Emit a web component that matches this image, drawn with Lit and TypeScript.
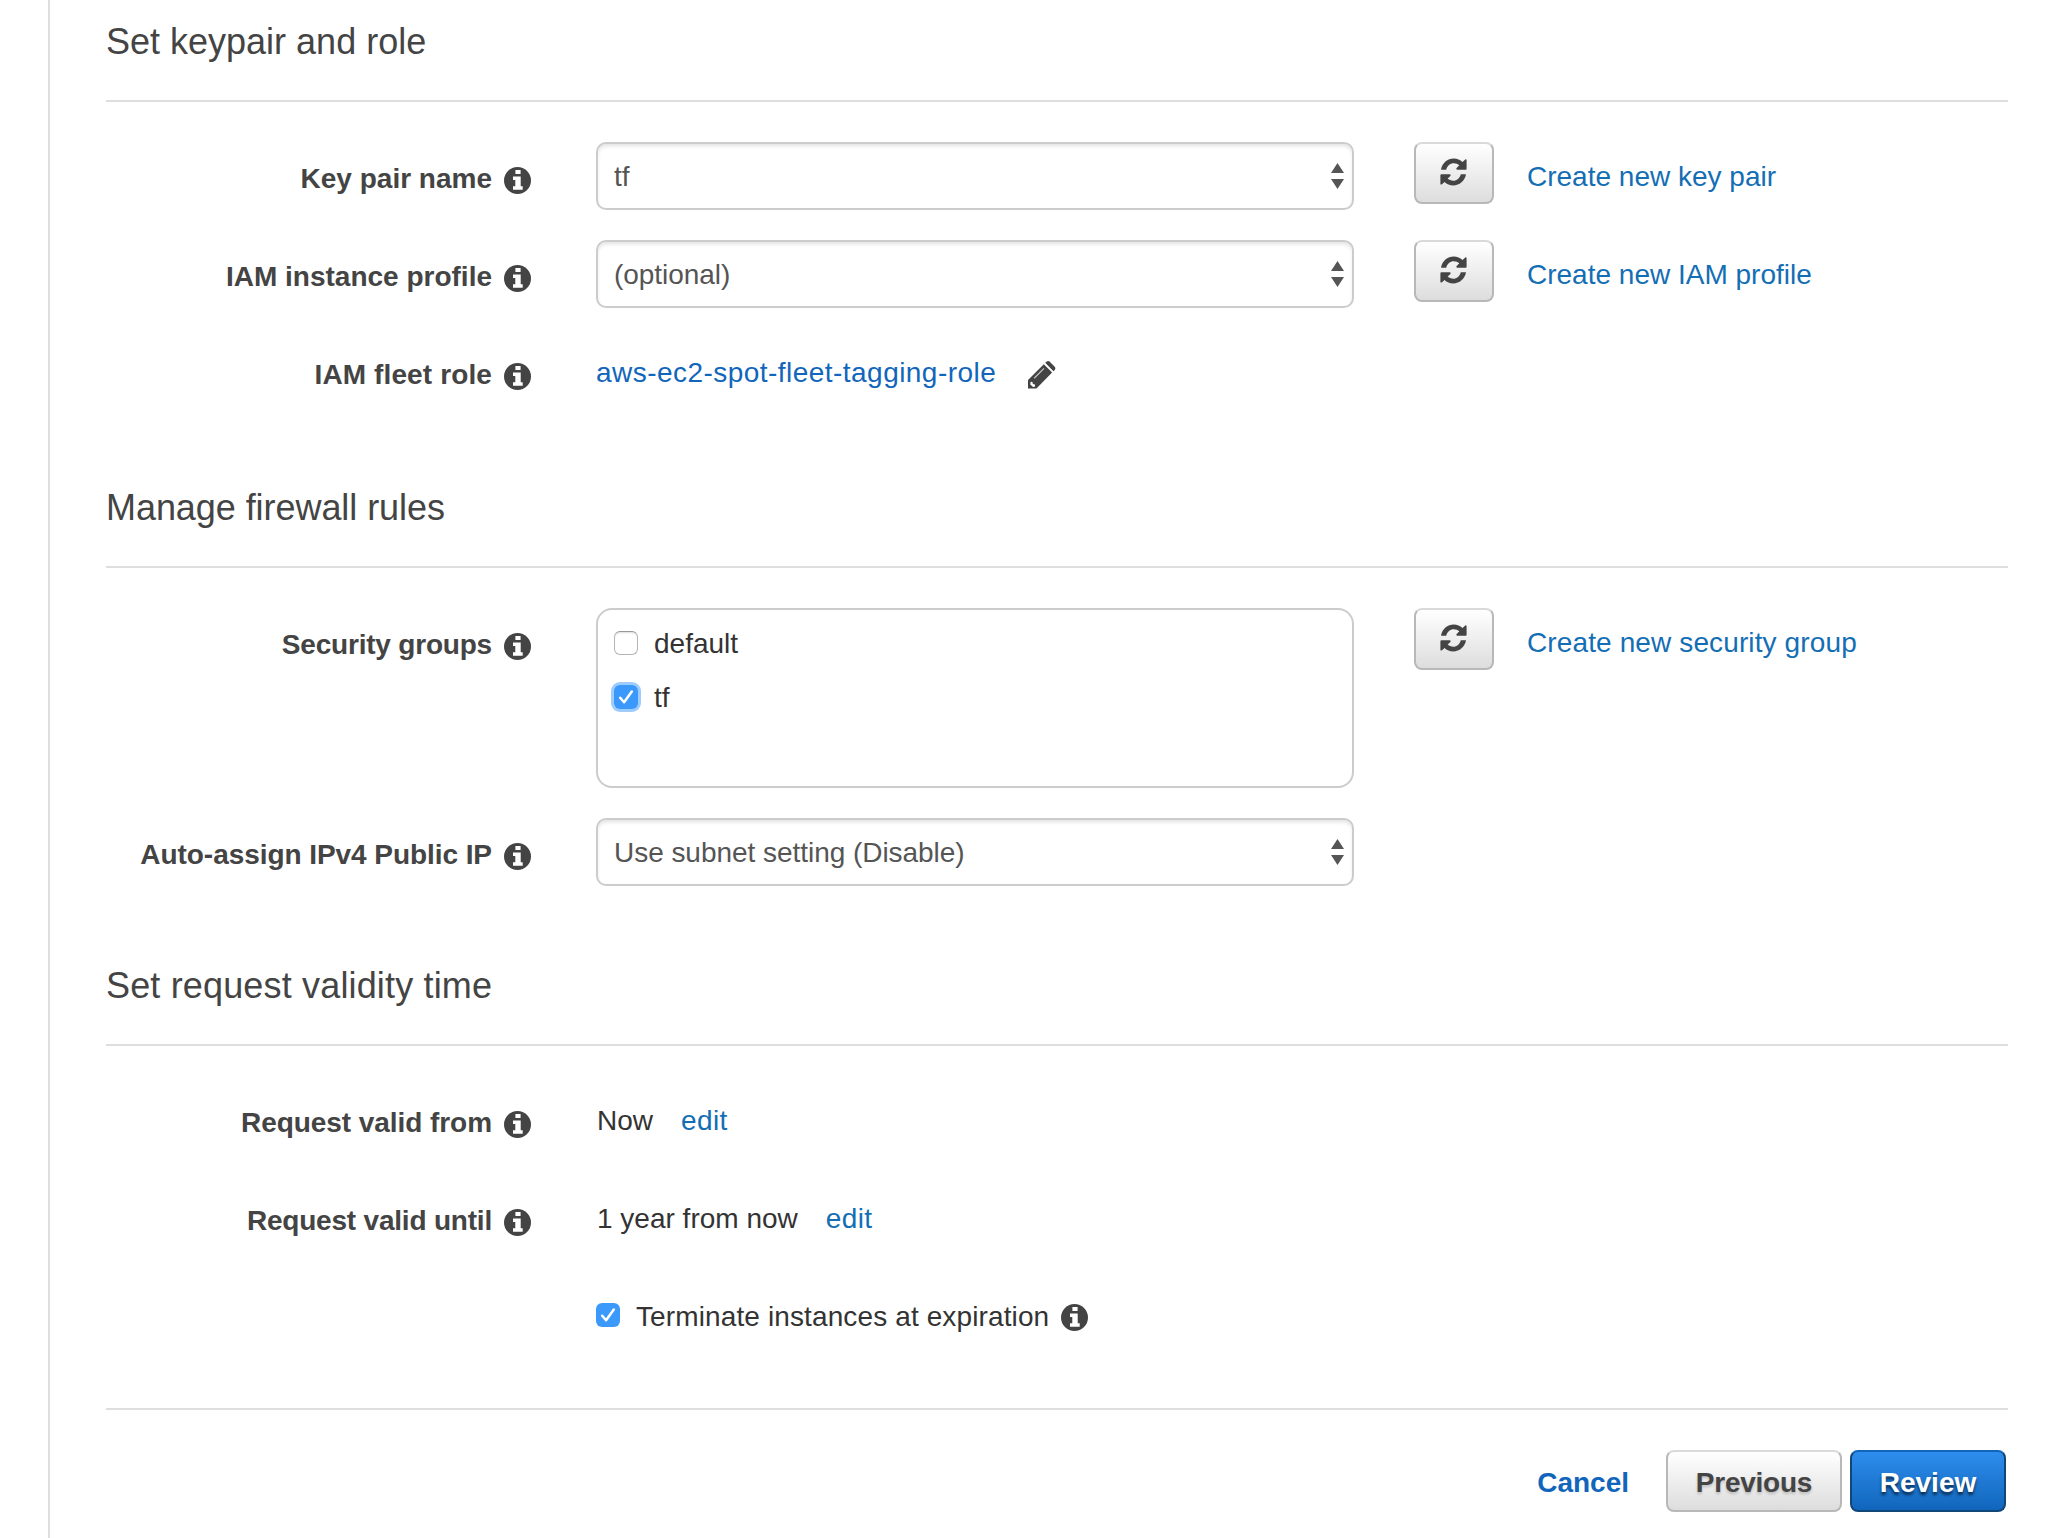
import { LitElement, html, svg, css } from "lit";
import { customElement, property } from "lit/decorators.js";

@customElement("info-icon")
class InfoIcon extends LitElement {
  static styles = css`
    :host { display: block; width: 27px; height: 27px; flex: none; }
    svg { display: block; }
  `;
  render() {
    return html`<svg width="27" height="27" viewBox="0 0 27 27">
      <circle cx="13.5" cy="13.5" r="13.5" fill="#444"/>
      <path fill="#fff" d="M11.4 3h5.2v4h-5.2zM9 9.500h7.700v9.700h2v3.500H9v-3.500h2.300v-6.200H9z"/>
    </svg>`;
  }
}

@customElement("check-box")
class CheckBox extends LitElement {
  @property({ type: Boolean }) checked = false;
  @property({ type: Boolean }) focused = false;
  static styles = css`
    :host { display: block; flex: none; }
    .box {
      box-sizing: border-box; width: 24px; height: 24px; border-radius: 6px;
      border: 1px solid #b4b4b4; border-top-color: #999; background: #fff;
      box-shadow: inset 0 2px 2px -1px #ddd;
    }
    .on { border: 0; background: #3b99fc; box-shadow: none; }
    .ring { box-shadow: 0 0 0 3px #9dccfd; }
    svg { display: block; }
  `;
  render() {
    const cls = `box ${this.checked ? "on" : ""} ${this.focused ? "ring" : ""}`;
    return html`<div class=${cls}>
      ${this.checked
        ? html`<svg width="24" height="24" viewBox="0 0 24 24"><path d="M6.2 12.8l3.900 4.500 7.700-10.700" fill="none" stroke="#fff" stroke-width="2.5" stroke-linecap="round" stroke-linejoin="round"/></svg>`
        : ""}
    </div>`;
  }
}

@customElement("select-box")
class SelectBox extends LitElement {
  @property() value = "";
  static styles = css`
    .select {
      box-sizing: border-box; width: 758px; height: 68px; padding: 0 8px 0 16px;
      display: flex; align-items: center; justify-content: space-between;
      border: 2px solid #ccc; border-radius: 10px; background: #fff; color: #555;
      box-shadow: inset 0 3px 4px -1px rgba(0, 0, 0, 0.12);
    }
    .value { line-height: 32px; padding-top: 2px; letter-spacing: -0.04px; }
    svg { display: block; }
  `;
  render() {
    return html`<div class="select">
      <span class="value">${this.value}</span>
      <svg width="13" height="26" viewBox="0 0 13 26"><path fill="#555" d="M6.500 0L13 10H0zM0 16h13L6.500 26z"/></svg>
    </div>`;
  }
}

const refreshIcon = svg`<path fill="#444" d="M1 11.6C2.2 4.8 7.6.3 14 .3c3.400 0 6.500 1.300 8.800 3.500l2.600-2.300c.7-.6 1.600-.3 1.600.6v8.500c0 .6-.4 1-1 1h-8.400c-1 0-1.400-1-.7-1.700l2.700-2.700C18.100 5.800 16.200 5 13.900 5 10.300 5 7.300 7.600 6.300 11.600z"/><path fill="#444" d="M26.400 16.300C25.200 23.100 19.800 27.600 13.400 27.600c-3.400 0-6.500-1.300-8.800-3.500L2 26.400c-.7.600-1.600.300-1.600-.600v-8.500c0-.6.400-1 1-1h8.400c1 0 1.400 1 .7 1.700l-2.700 2.700c1.500 1.400 3.400 2.200 5.700 2.200 3.600 0 6.600-2.600 7.600-6.600z"/>`;

@customElement("refresh-button")
class RefreshButton extends LitElement {
  static styles = css`
    .button {
      box-sizing: border-box; width: 80px; height: 62px; padding: 0 1px 2px 0; margin: 0;
      display: flex; align-items: center; justify-content: center;
      border: 2px solid #b8b8b8; border-top-color: #dadada; border-radius: 8px;
      background: linear-gradient(#fff, #ddd);
    }
    svg { display: block; }
  `;
  render() {
    return html`<button class="button" aria-label="Refresh">
      <svg width="27" height="28" viewBox="0 0 27.400 28">${refreshIcon}</svg>
    </button>`;
  }
}

@customElement("app-root")
class AppRoot extends LitElement {
  static styles = css`
    :host {
      display: block; font-family: "Liberation Sans", Arial, Helvetica, sans-serif;
      font-size: 28px; line-height: 32px; color: #333; background: #fff;
    }
    .page {
      box-sizing: border-box; height: 1538px; overflow: hidden; margin-left: 48px;
      border-left: 2px solid #dedede; padding: 0 54px 0 56px;
    }
    .title {
      box-sizing: border-box; margin: 0; height: 102px; padding-top: 21px;
      font-size: 36px; line-height: 42px; font-weight: 400; color: #444;
      border-bottom: 2px solid #dedede;
    }
    .rows { padding-top: 40px; }
    .row {
      height: 98px; display: grid; align-items: start;
      grid-template-columns: 490px 818px 113px auto;
    }
    .row.tall { height: 210px; }
    .label {
      box-sizing: border-box; width: 425px; padding-top: 21px;
      display: flex; justify-content: flex-end; gap: 12px;
      font-weight: 700; color: #444; white-space: nowrap;
    }
    .label info-icon { margin-top: 4px; }
    .link { color: #146eb4; text-decoration: none; white-space: nowrap; }
    .deep { color: #1166bb; }
    .side { padding-top: 19px; }
    .text { display: flex; padding-top: 19px; white-space: nowrap; }
    .fleet { gap: 32px; }
    .fleet .link { letter-spacing: 0.46px; }
    .fleet svg { display: block; margin-top: 4px; }
    .when { gap: 28px; padding-left: 1px; }
    .when .link { letter-spacing: 0.4px; }
    .groups {
      box-sizing: border-box; width: 758px; height: 180px; padding: 18px 16px;
      border: 2px solid #ccc; border-radius: 16px;
    }
    .option { display: flex; gap: 16px; height: 54px; }
    .option check-box { margin-top: 3px; }
    .expire { display: flex; gap: 16px; padding-top: 19px; white-space: nowrap; }
    .expire check-box { margin-top: 2px; }
    .expire info-icon { margin: 3px 0 0 -4px; }
    .loose { letter-spacing: 0.12px; }
    .looser { letter-spacing: 0.16px; }
    .tight { letter-spacing: -0.06px; }
    .tighter { letter-spacing: -0.2px; }
    .one { height: 466px; }
    .two { height: 478px; }
    .three { height: 464px; }
    .footer {
      border-top: 2px solid #dedede; padding: 40px 2px 0 0; display: flex;
      justify-content: flex-end; align-items: center; font-weight: 700;
    }
    .cancel { margin-right: 37px; padding-top: 4px; }
    .btn {
      box-sizing: border-box; height: 62px; padding: 4px 0 0; margin: 0; font: inherit;
      border-radius: 8px; border: 2px solid #b8b8b8;
    }
    .previous {
      width: 176px; margin-right: 8px; color: #444; border-top-color: #dadada; letter-spacing: -0.25px;
      background: linear-gradient(#fff, #ddd); text-shadow: 0 2px 3px rgba(0, 0, 0, 0.2);
    }
    .review {
      width: 156px; color: #fff; border-color: #0f4778; border-top-color: #1166bb;
      background: linear-gradient(#2e8ded, #1166bb); text-shadow: 0 3px 3px rgba(0, 0, 0, 0.6);
    }
  `;

  label(text: string, tracking = "") {
    return html`<div class="label"><span class=${tracking}>${text}</span><info-icon></info-icon></div>`;
  }

  create(text: string, tracking = "") {
    return html`<refresh-button></refresh-button><a class="link side ${tracking}">${text}</a>`;
  }

  render() {
    return html`<main class="page">
      <section class="one">
        <h2 class="title">Set keypair and role</h2>
        <div class="rows">
          <div class="row">
            ${this.label("Key pair name")}
            <select-box value="tf"></select-box>
            ${this.create("Create new key pair")}
          </div>
          <div class="row">
            ${this.label("IAM instance profile")}
            <select-box value="(optional)"></select-box>
            ${this.create("Create new IAM profile")}
          </div>
          <div class="row">
            ${this.label("IAM fleet role", "loose")}
            <div class="text fleet">
              <a class="link deep">aws-ec2-spot-fleet-tagging-role</a>
              <svg width="28" height="28" viewBox="0 0 28 28">
                <path fill="#444" d="M0 27.500V19L15.800 3.200l8.300 8.300L8.500 27.500zM17.200 1.800L18.500.7q1.800-1.300 3.500.2l4.500 4.500q1.700 1.800.2 3.700l-1.200 1.200z"/>
                <path fill="#fff" d="M2.600 20.800l1.800.2.5 2 2 .5.200 2-2 .600-2.800-2.600z"/>
                <path d="M6.200 17.200L16 7.400" stroke="#c4c4c4" stroke-width="1.300"/>
              </svg>
            </div>
          </div>
        </div>
      </section>

      <section class="two">
        <h2 class="title tight">Manage firewall rules</h2>
        <div class="rows">
          <div class="row tall">
            ${this.label("Security groups", "tighter")}
            <div class="groups">
              <div class="option"><check-box></check-box><span>default</span></div>
              <div class="option"><check-box checked focused></check-box><span>tf</span></div>
            </div>
            ${this.create("Create new security group", "loose")}
          </div>
          <div class="row">
            ${this.label("Auto-assign IPv4 Public IP", "tight")}
            <select-box value="Use subnet setting (Disable)"></select-box>
          </div>
        </div>
      </section>

      <section class="three">
        <h2 class="title looser">Set request validity time</h2>
        <div class="rows">
          <div class="row">
            ${this.label("Request valid from", "tight")}
            <div class="text when"><span>Now</span><a class="link">edit</a></div>
          </div>
          <div class="row">
            ${this.label("Request valid until", "tighter")}
            <div class="text when"><span>1 year from now</span><a class="link">edit</a></div>
          </div>
          <div class="row">
            <span></span>
            <div class="expire">
              <check-box checked></check-box>
              <span class="loose">Terminate instances at expiration</span>
              <info-icon></info-icon>
            </div>
          </div>
        </div>
      </section>

      <footer class="footer">
        <a class="link deep cancel">Cancel</a>
        <button class="btn previous">Previous</button>
        <button class="btn review">Review</button>
      </footer>
    </main>`;
  }
}
